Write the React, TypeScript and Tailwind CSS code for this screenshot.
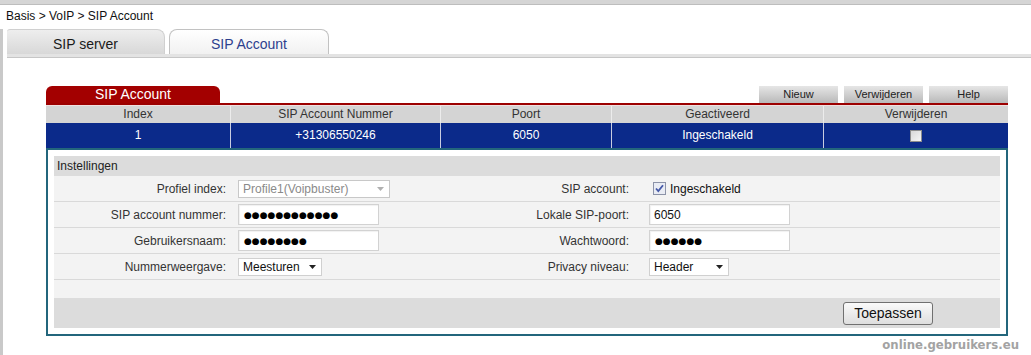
import React from 'react';

const columns = [
  { title: 'Index', width: 'w-[185px]' },
  { title: 'SIP Account Nummer', width: 'w-[210px]' },
  { title: 'Poort', width: 'w-[171px]' },
  { title: 'Geactiveerd', width: 'w-[212px]' },
  { title: 'Verwijderen', width: 'flex-1' },
];

function Arrow({ color = '#222' }: { color?: string }) {
  return (
    <svg width="7" height="4" viewBox="0 0 7 4" className="shrink-0">
      <path d="M0 0h7L3.5 4z" fill={color} />
    </svg>
  );
}

function Select({ value, width, disabled }: { value: string; width: string; disabled?: boolean }) {
  return (
    <div
      className={`flex h-[18px] items-center justify-between border bg-white pl-[4px] pr-[5px] text-[12px] leading-[16px] ${width} ${
        disabled ? 'border-[#c8c8c8] text-[#8a8a8a]' : 'border-[#d0d0d0] text-[#111]'
      }`}
    >
      <span>{value}</span>
      <Arrow color={disabled ? '#b0b0b0' : '#222'} />
    </div>
  );
}

function Field({ children, dots }: { children: React.ReactNode; dots?: boolean }) {
  return (
    <div
      className={`flex h-[21px] w-[141px] items-center border border-[#d2d2d2] bg-white shadow-[inset_1px_1px_1px_rgba(0,0,0,0.06)] ${
        dots ? "pl-[5px] font-['DejaVu_Sans'] text-[9px] leading-[12px] text-black" : 'pl-[4px] text-[12px] text-[#111]'
      }`}
    >
      {children}
    </div>
  );
}

function Row({ left, leftValue, right, rightValue }: { left: string; leftValue: React.ReactNode; right: string; rightValue: React.ReactNode }) {
  return (
    <div className="grid h-[26px] grid-cols-[180px_186px_217px_1fr] items-center border-b border-[#d9d9d9] bg-[#f3f3f3] text-[12px] text-[#333]">
      <div className="pr-[8px] text-right">{left}</div>
      <div className="pl-[4px]">{leftValue}</div>
      <div className="pr-[8px] text-right">{right}</div>
      <div className="pl-[12px]">{rightValue}</div>
    </div>
  );
}

function TabButton({ label }: { label: string }) {
  return (
    <div className="h-[17px] w-[79px] bg-gradient-to-b from-[#e6e6e6] to-[#b9b9b9] text-center text-[11px] leading-[17px] text-[#222]">
      {label}
    </div>
  );
}

export default function App() {
  return (
    <div className="relative h-[355px] w-[1031px] overflow-hidden bg-white font-['Liberation_Sans',Arial,sans-serif]">
      <div className="h-[5px] border-b border-[#bdbdbd] bg-[#d5d5d5]" />
      <div className="h-[24px] pl-[6px] pt-[4px] text-[12px] leading-[15px] text-[#111]">Basis &gt; VoIP &gt; SIP Account</div>

      <div className="flex">
        <div className="h-[326px] w-[3px] bg-[#c9c9c9]" />
        <div className="flex-1 pl-[4px]">
          {/* tabs */}
          <div className="flex h-[25px] items-end gap-[4px]">
            <div className="h-[25px] w-[158px] rounded-tr-[8px] rounded-tl-[3px] border-r border-t border-[#d0d0d0] bg-gradient-to-b from-[#eeeeee] to-[#d8d8d8] pt-[5px] text-center text-[14px] leading-[18px] text-[#1a1a1a]">
              SIP server
            </div>
            <div className="h-[25px] w-[160px] rounded-t-[8px] border border-b-0 border-[#c2c2c2] bg-gradient-to-b from-white to-[#f1f1f1] pt-[5px] text-center text-[14px] leading-[18px] text-[#2d3f8e]">
              SIP Account
            </div>
          </div>
          <div className="h-[4px] border-b border-[#c6c6c6] bg-[#e3e3e3]" />

          {/* content */}
          <div className="ml-[39px] mt-[28px] w-[962px]">
            <div className="flex h-[17px] items-end justify-between">
              <div className="h-[17px] w-[174px] rounded-t-[6px] bg-[#a30000] text-center text-[14px] leading-[17px] text-white">SIP Account</div>
              <div className="flex gap-[6px]">
                <TabButton label="Nieuw" />
                <TabButton label="Verwijderen" />
                <TabButton label="Help" />
              </div>
            </div>
            <div className="h-[2px] bg-[#9c0000]" />
            <div className="h-px bg-[#f0e0e0]" />

            <div className="flex h-[17px] bg-[#d4d4d4] text-[12px] leading-[17px] text-[#333]">
              {columns.map((c, i) => (
                <div key={c.title} className={`${c.width} text-center ${i < 4 ? 'border-r border-[#ececec]' : ''}`}>
                  {c.title}
                </div>
              ))}
            </div>
            <div className="flex h-[25px] items-center bg-[#0b2a8a] text-[12px] text-white">
              <div className="h-full w-[185px] border-r border-[#c8cde0] text-center leading-[25px]">1</div>
              <div className="h-full w-[210px] border-r border-[#c8cde0] text-center leading-[25px]">+31306550246</div>
              <div className="h-full w-[171px] border-r border-[#c8cde0] text-center leading-[25px]">6050</div>
              <div className="h-full w-[212px] border-r border-[#c8cde0] text-center leading-[25px]">Ingeschakeld</div>
              <div className="flex h-full flex-1 items-center justify-center">
                <div className="h-[12px] w-[12px] border border-[#8d8d8d] bg-gradient-to-br from-[#d8d8d8] to-[#f6f6f6]" />
              </div>
            </div>

            {/* settings panel */}
            <div className="border-2 border-[#23667c] p-[6px]">
              <div className="h-[20px] bg-[#dcdcdc] pl-[3px] text-[12px] leading-[21px] text-[#222]">Instellingen</div>
              <Row
                left="Profiel index:"
                leftValue={<Select value="Profile1(Voipbuster)" width="w-[152px]" disabled />}
                right="SIP account:"
                rightValue={
                  <div className="flex items-center gap-[4px] pl-[4px]">
                    <svg width="13" height="13" viewBox="0 0 13 13">
                      <rect x="0.5" y="0.5" width="12" height="12" fill="#e9ecf4" stroke="#8c93a8" />
                      <path d="M3 6.5l2.3 2.6L10 3.2" fill="none" stroke="#4559a8" strokeWidth="1.8" />
                    </svg>
                    <span className="text-[12px] text-[#111]">Ingeschakeld</span>
                  </div>
                }
              />
              <Row
                left="SIP account nummer:"
                leftValue={<Field dots>●●●●●●●●●●●●</Field>}
                right="Lokale SIP-poort:"
                rightValue={<Field>6050</Field>}
              />
              <Row
                left="Gebruikersnaam:"
                leftValue={<Field dots>●●●●●●●●</Field>}
                right="Wachtwoord:"
                rightValue={<Field dots>●●●●●●</Field>}
              />
              <Row
                left="Nummerweergave:"
                leftValue={<Select value="Meesturen" width="w-[84px]" />}
                right="Privacy niveau:"
                rightValue={<Select value="Header" width="w-[80px]" />}
              />
              <div className="h-[18px] bg-[#f3f3f3]" />
              <div className="flex h-[30px] items-center justify-end bg-[#dcdcdc] pr-[67px]">
                <button className="h-[23px] w-[90px] rounded-[3px] border border-[#707070] bg-gradient-to-b from-[#fafafa] to-[#dedede] text-[14px] text-[#111]">
                  Toepassen
                </button>
              </div>
            </div>
          </div>
        </div>
      </div>

      <div className="absolute bottom-[2px] right-[12px] font-['DejaVu_Sans_Condensed','DejaVu_Sans',sans-serif] text-[13px] font-bold leading-[16px] text-[#a3a3a3]">
        online.gebruikers.eu
      </div>
    </div>
  );
}
